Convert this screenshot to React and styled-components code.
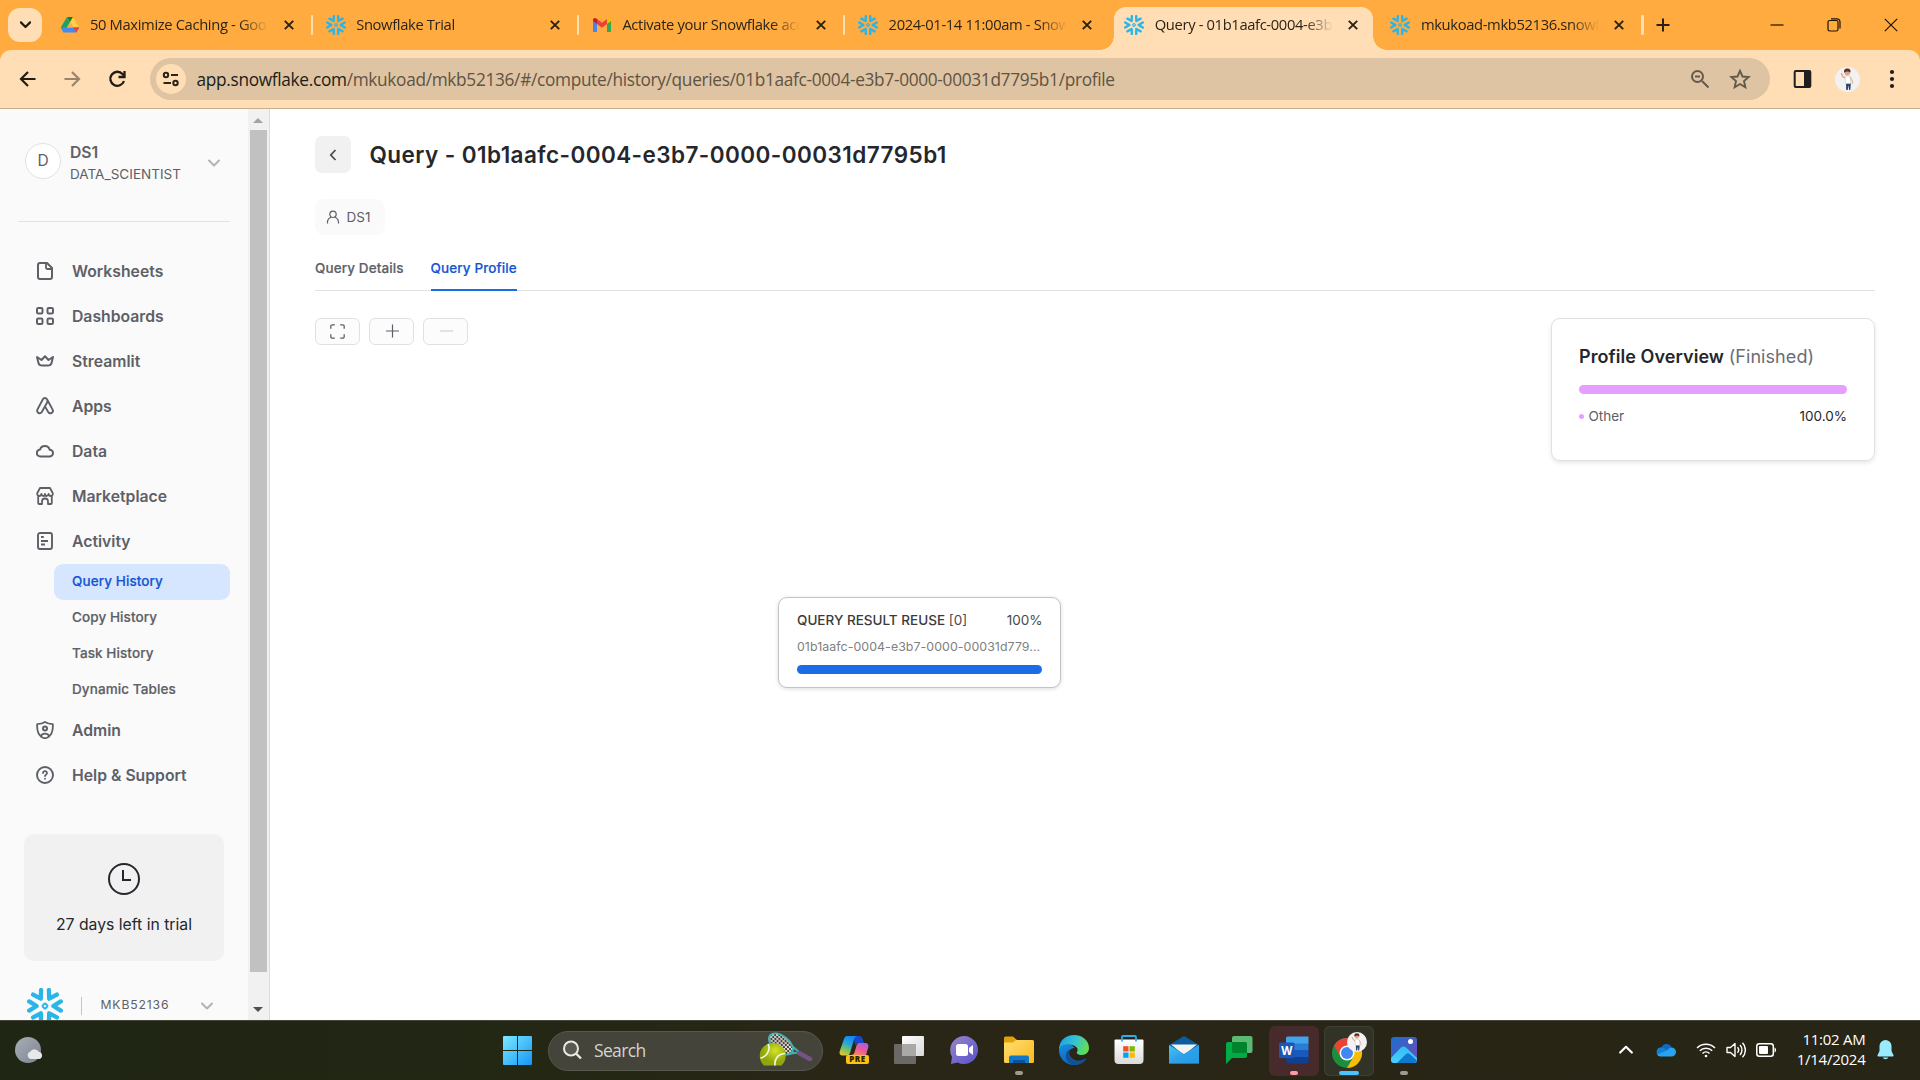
import React from "react";
import styled, { createGlobalStyle, css } from "styled-components";

const Global = createGlobalStyle`
  * { box-sizing: border-box; }
  html, body { margin: 0; padding: 0; background: #fff; }
  body { font-family: Inter, "Liberation Sans", sans-serif; overflow: hidden; }
`;

const segoe = css`font-family: "Open Sans", "Noto Sans", sans-serif;`;

const Screen = styled.div`
  width: 1920px;
  height: 1080px;
  display: flex;
  flex-direction: column;
  overflow: hidden;
`;

/* ---------- Browser chrome ---------- */
const TabStrip = styled.div`
  height: 50px;
  flex: none;
  display: flex;
  align-items: stretch;
  background: #ffab40;
  padding-left: 8px;
`;
const TabSearch = styled.div`
  width: 34px;
  height: 34px;
  margin: 8px 5.5px 0 0;
  border-radius: 12px;
  background: #ffddb5;
  display: flex;
  align-items: center;
  justify-content: center;
`;
const Tab = styled.div`
  position: relative;
  width: 266.2px;
  flex: none;
  display: flex;
  align-items: center;
  padding-left: 12px;
  ${(p) => p.$active && css`
    margin-top: 7px;
    padding-bottom: 7px;
    &::before {
      content: "";
      position: absolute;
      inset: 0 5px 0 2px;
      background: #ffddb5;
      border-radius: 12px 12px 0 0;
    }
    &::after {
      content: "";
      position: absolute;
      bottom: 0;
      left: -12px;
      right: -9px;
      height: 14px;
      background:
        radial-gradient(circle at 0 0, transparent 13.5px, #ffddb5 14px) left / 14px 14px no-repeat,
        radial-gradient(circle at 100% 0, transparent 13.5px, #ffddb5 14px) right / 14px 14px no-repeat;
    }
  `}
  & > * { position: relative; z-index: 1; flex: none; }
`;
const TabIcon = styled.span`
  width: 20px;
  height: 20px;
  display: flex;
`;
const TabTitle = styled.span`
  ${segoe}
  margin-left: 10.5px;
  width: 177px;
  height: 24px;
  line-height: 23px;
  font-size: 14.75px;
  letter-spacing: -0.36px;
  color: #2b2419;
  white-space: nowrap;
  overflow: hidden;
  mask-image: linear-gradient(90deg, #000 150px, transparent 178px);
`;
const TabClose = styled.span`
  display: flex;
  margin-left: 15.5px;
`;
const TabDivider = styled.i`
  width: 2.5px;
  height: 20px;
  margin-left: 16px;
  border-radius: 1px;
  background: #ffddb5;
  visibility: ${(p) => (p.$hidden ? "hidden" : "visible")};
`;
const NewTab = styled.div`
  display: flex;
  align-items: center;
  margin-left: 11.5px;
`;
const WindowButtons = styled.div`
  margin-left: auto;
  display: flex;
  align-items: center;
  height: 50px;
  & > span {
    width: 57.3px;
    display: flex;
    justify-content: center;
  }
`;
const ToolbarBack = styled.div`
  flex: none;
  background: #ffab40;
`;
const Toolbar = styled.div`
  height: 59px;
  display: flex;
  align-items: center;
  background: #ffddb5;
  border-bottom: 1px solid #c9ae8e;
  border-radius: 11px 11px 0 0;
  padding-left: 17px;
`;
const NavButton = styled.span`
  width: 22px;
  height: 22px;
  display: flex;
  flex: none;
  margin-right: ${(p) => p.$mr || 23}px;
  opacity: ${(p) => (p.$dim ? 0.45 : 1)};
`;
const Omnibox = styled.div`
  ${segoe}
  width: 1620px;
  flex: none;
  height: 42px;
  border-radius: 21px;
  background: #dec4a2;
  display: flex;
  align-items: center;
  padding: 0 19px 0 6px;
`;
const SiteInfo = styled.span`
  width: 30px;
  height: 30px;
  border-radius: 50%;
  background: #ffddb5;
  display: flex;
  align-items: center;
  justify-content: center;
  margin-right: 10.5px;
`;
const Url = styled.span`
  font-size: 17.25px;
  letter-spacing: -0.31px;
  color: #5f5345;
  flex: 1;
  white-space: nowrap;
  b { font-weight: 400; color: #201c17; }
`;
const OmniIcon = styled.span`
  display: flex;
  margin-left: 19px;
`;
const ToolbarRight = styled.div`
  display: flex;
  align-items: center;
  flex: 1;
  padding-left: 21.5px;
  svg { flex: none; }
  svg + svg { margin-left: 22.5px; }
  svg:last-child { margin-left: 25px; }
`;

/* ---------- Page ---------- */
const Page = styled.div`
  height: 911px;
  flex: none;
  display: flex;
  overflow: hidden;
  background: #fff;
`;
const Sidebar = styled.aside`
  width: 248px;
  flex: none;
  background: #fafafa;
  overflow: hidden;
  color: #5d6066;
`;
const Account = styled.div`
  height: 113px;
  margin: 0 18px;
  padding: 0 10px 22px 7px;
  border-bottom: 1px solid #dfe1e3;
  display: flex;
  align-items: center;
`;
const Avatar = styled.div`
  width: 36px;
  height: 36px;
  border-radius: 50%;
  border: 1px solid #e0e1e3;
  background: #fff;
  display: flex;
  align-items: center;
  justify-content: center;
  font-size: 15.5px;
  line-height: 18px;
  padding-bottom: 1px;
  margin: 14px 9px 0 0;
`;
const AccountText = styled.div`
  padding-top: 18px;
  flex: 1;
  strong { display: block; font-size: 15.75px; line-height: 22px; font-weight: 600; }
  span { display: block; font-size: 13.5px; line-height: 21px; letter-spacing: 0.03px; }
`;
const ChevronWrap = styled.span`
  display: flex;
  margin-top: ${(p) => p.$mt || 0}px;
  margin-left: auto;
`;
const Nav = styled.nav`
  padding: 26.5px 18px 0;
`;
const NavItem = styled.div`
  height: 45px;
  padding-left: 18px;
  display: flex;
  align-items: center;
  gap: 18px;
  font-size: 15.75px;
  font-weight: 600;
  svg { flex: none; }
`;
const SubList = styled.div`
  padding-left: 36px;
  margin: 0.5px 0 -0.5px;
`;
const SubItem = styled.div`
  height: 36px;
  line-height: 34px;
  padding-left: 18px;
  border-radius: 9px;
  font-size: 13.5px;
  font-weight: 500;
  letter-spacing: 0.09px;
  -webkit-text-stroke: 0.2px currentColor;
  background: ${(p) => (p.$active ? "#d6e6ff" : "transparent")};
  color: ${(p) => (p.$active ? "#1455d4" : "inherit")};
`;
const Trial = styled.div`
  margin: 36.5px 24px 0;
  height: 127px;
  border-radius: 10px;
  background: #f1f1f1;
  display: flex;
  flex-direction: column;
  align-items: center;
  padding-top: 29px;
  font-size: 15.75px;
  color: #24272c;
  gap: 20px;
`;
const Footer = styled.div`
  height: 90px;
  display: flex;
  align-items: flex-start;
  padding: 27px 35px 0 27px;
`;
const FooterRule = styled.i`
  width: 1px;
  height: 18px;
  margin: 9px 18.5px 0 18px;
  background: #c3c5c8;
`;
const FooterName = styled.span`
  font-size: 12.2px;
  letter-spacing: 0.85px;
  line-height: 18px;
  margin-top: 8px;
`;
const ScrollTrack = styled.div`
  width: 22px;
  flex: none;
  background: #f1f1f1;
  border-right: 1px solid #dcdcdc;
  padding: 9px 3px 0 2px;
  display: flex;
  flex-direction: column;
  align-items: center;
`;
const Thumb = styled.div`
  width: 17px;
  height: 842px;
  flex: none;
  margin: 7px 0 35px;
  background: #c1c1c1;
`;
const ArrowHead = styled.i`
  border: 5px solid transparent;
  ${(p) => p.$up
    ? css`border-top: 0; border-bottom-color: #a3a3a3;`
    : css`border-bottom: 0; border-top-color: #505050;`}
`;
const Main = styled.main`
  flex: 1;
  padding: 27px 45px 0 45px;
  color: #24272c;
`;
const TitleRow = styled.div`
  display: flex;
  align-items: center;
  height: 37px;
`;
const BackButton = styled.div`
  width: 36px;
  height: 37px;
  border-radius: 7px;
  background: #f1f1f1;
  display: flex;
  align-items: center;
  justify-content: center;
`;
const Title = styled.h1`
  margin: 0 0 0 18.5px;
  font-size: 22.5px;
  font-weight: 600;
  letter-spacing: 0.43px;
  white-space: nowrap;
`;
const UserChip = styled.div`
  width: 70px;
  height: 36px;
  margin-top: 26px;
  border-radius: 9px;
  background: #fafafa;
  color: #5d6066;
  font-size: 13.5px;
  display: flex;
  align-items: center;
  gap: 6.5px;
  padding-left: 11px;
`;
const PageTabs = styled.div`
  margin-top: 14px;
  height: 42px;
  border-bottom: 1px solid #dfe1e3;
  display: flex;
  gap: 27px;
`;
const PageTab = styled.div`
  height: 42px;
  line-height: 38px;
  font-size: 13.5px;
  font-weight: 500;
  letter-spacing: 0.1px;
  -webkit-text-stroke: 0.2px currentColor;
  color: ${(p) => (p.$active ? "#1455d4" : "#5d6066")};
  border-bottom: 2px solid ${(p) => (p.$active ? "#1a6ce7" : "transparent")};
`;
const Body = styled.div`
  display: flex;
  justify-content: space-between;
  align-items: flex-start;
  margin-top: 27px;
`;
const ZoomTools = styled.div`
  display: flex;
  gap: 9px;
`;
const ToolButton = styled.div`
  width: 45px;
  height: 27px;
  border: 1px solid #dfe1e3;
  border-radius: 6px;
  background: #fcfcfc;
  display: flex;
  align-items: center;
  justify-content: center;
  color: ${(p) => (p.$disabled ? "#cfd1d4" : "#5d6066")};
`;
const OverviewCard = styled.section`
  width: 324px;
  height: 143px;
  border: 1px solid #dfe1e3;
  border-radius: 9px;
  box-shadow: 0 2px 4px rgba(0, 0, 0, 0.1);
  padding: 27px 27px 0;
`;
const OverviewTitle = styled.div`
  font-size: 18px;
  line-height: 22px;
  font-weight: 600;
  letter-spacing: 0.07px;
  white-space: nowrap;
  span { font-weight: 400; color: #6a6d73; }
`;
const Bar = styled.div`
  height: 9px;
  border-radius: 5px;
  margin-top: ${(p) => p.$mt}px;
  background: ${(p) => p.$color};
`;
const Legend = styled.div`
  margin-top: 13px;
  display: flex;
  align-items: center;
  font-size: 13.5px;
  line-height: 18px;
  i { width: 5px; height: 5px; border-radius: 50%; background: #e5a0ff; margin-right: 4.5px; }
  span { color: #5d6066; flex: 1; }
`;
const Canvas = styled.div`
  position: relative;
`;
const Node = styled.div`
  position: absolute;
  left: 463px;
  top: 136px;
  width: 283px;
  height: 91px;
  border: 1px solid #c2c4c7;
  border-radius: 9px;
  background: #fff;
  box-shadow: 0 1px 4px rgba(0, 0, 0, 0.14);
  padding: 12px 18px 0;
`;
const NodeHead = styled.div`
  display: flex;
  justify-content: space-between;
  font-size: 13.5px;
  line-height: 20px;
  color: #4a4a4a;
  margin-right: -0.5px;
  b { font-weight: 500; color: #3a3a3a; }
`;
const NodeSub = styled.div`
  font-size: 12.375px;
  line-height: 18px;
  margin-top: 8px;
  letter-spacing: 0.07px;
  color: #808080;
  white-space: nowrap;
`;

/* ---------- Taskbar ---------- */
const Taskbar = styled.footer`
  ${segoe}
  height: 60px;
  flex: none;
  display: flex;
  align-items: center;
  background: linear-gradient(90deg, #202614 0%, #232714 28%, #2a2617 45%, #272515 100%);
  border-top: 1px solid #45453a;
  color: #fff;
`;
const Weather = styled.div`
  width: 492px;
  padding-left: 14px;
  display: flex;
`;
const Slot = styled.div`
  position: relative;
  width: 50px;
  height: 50px;
  margin-right: 5px;
  flex: none;
  display: flex;
  align-items: center;
  justify-content: center;
  border-radius: 6px;
  background: ${(p) => p.$bg || "transparent"};
  box-shadow: ${(p) => p.$edge || "none"};
  & > svg { margin-top: -1px; }
`;
const Indicator = styled.i`
  position: absolute;
  bottom: 1px;
  left: 50%;
  transform: translateX(-50%);
  width: ${(p) => p.$w || 8}px;
  height: 4px;
  border-radius: 2px;
  background: ${(p) => p.$color || "#9c9c94"};
`;
const SearchBox = styled.div`
  width: 275px;
  height: 40px;
  margin: 0 6px 0 1px;
  border-radius: 20px;
  background: #45443a;
  border: 1px solid #58574c;
  display: flex;
  align-items: center;
  padding: 0 9px 2px 13px;
  font-size: 17.5px;
  letter-spacing: -0.65px;
  color: #d4d3cd;
  span { flex: 1; margin-left: 12px; }
`;
const Tray = styled.div`
  margin-left: auto;
  display: flex;
  align-items: center;
  padding: 0 26.5px 2px 0;
`;
const TrayIcon = styled.span`
  display: flex;
  margin-right: ${(p) => p.$mr || 10}px;
`;
const Clock = styled.div`
  width: 79px;
  text-align: right;
  font-size: 15px;
  line-height: 20px;
  letter-spacing: -0.25px;
  margin: -2px 11px 0 0;
  white-space: nowrap;
`;

/* ---------- Drawings ---------- */
const Snowflake = ({ size = 20 }) => (
  <svg width={size} height={size} viewBox="0 0 36 36" fill="none" stroke="#29b5e8" strokeWidth="4.300" strokeLinecap="round" strokeLinejoin="round">
    {[0, 60, 120, 180, 240, 300].map((a) => (
      <path key={a} d="M2.200 13.400L9.600 18l-7.400 4.600" transform={`rotate(${a} 18 18)`} />
    ))}
    <rect x="16" y="16" width="4" height="4" rx=".8" strokeWidth="1.900" transform="rotate(45 18 18)" />
  </svg>
);
const Drive = () => (
  <svg width="20" height="20" viewBox="0 0 20 20">
    <path d="M7 2h6L7.200 12.200 3.700 17.600.8 12.600z" fill="#1ea362" />
    <path d="M7 2h6l6.200 10.600h-6z" fill="#ffcf48" />
    <path d="M7 2h6l-3 5z" fill="#188038" />
    <path d="M4 12.600h15.200l-2.900 5H3.700L.8 12.600z" fill="#4688f4" />
    <path d="M13.200 12.600h6l-2.900 5z" fill="#ea4335" />
    <path d="M10 7.200l3.200 5.400H6.900z" fill="#ffab40" />
  </svg>
);
const Gmail = () => (
  <svg width="20" height="20" viewBox="0 0 20 20">
    <path d="M1 5v11c0 .6.4 1 1 1h3V8z" fill="#4285f4" />
    <path d="M19 5v11c0 .6-.4 1-1 1h-3V8z" fill="#34a853" />
    <path d="M1 5c0-2 2-2.600 3.500-1.500L5 4v5L1 6z" fill="#c5221f" />
    <path d="M19 5c0-2-2-2.600-3.500-1.500L15 4v5l4-3z" fill="#fbbc04" />
    <path d="M5 4l5 3.800L15 4v5l-5 3.800L5 9z" fill="#ea4335" />
  </svg>
);
const Cross = () => (
  <svg width="12" height="12" viewBox="0 0 12 12" stroke="#2a2115" strokeWidth="1.900"><path d="M1.800 1.800l8.400 8.400M10.200 1.800l-8.400 8.400" /></svg>
);
const Chevron = ({ w = 12, color = "#b0b3b8", sw = 2, d = "M1 1.500l5 5 5-5" }) => (
  <svg width={w} height={w * 0.67} viewBox="0 0 12 8" fill="none" stroke={color} strokeWidth={sw} strokeLinecap="round" strokeLinejoin="round"><path d={d} /></svg>
);
const Person = ({ size }) => (
  <svg width={size} height={size} viewBox="0 0 26 26">
    <circle cx="13" cy="13" r="13" fill="#f3f1f2" />
    <path d="M6.500 6.500l2 4 3 1.500" stroke="#d9a184" strokeWidth="1.300" fill="none" />
    <path d="M10.500 9.500h5l1 8h-5.500z" fill="#fff" stroke="#b9c6b0" strokeWidth=".5" />
    <path d="M16 10.500l2.500 5-.8 2" stroke="#e3b49a" strokeWidth="1.200" fill="none" />
    <path d="M11.500 17.500h5l-.6 6.500h-1.300l-.4-5-1 5h-1.500z" fill="#2c4365" />
    <circle cx="12.800" cy="6" r="2.800" fill="#dba587" />
    <path d="M9.600 6c-.8-3.500 1.200-4.600 3.400-4.500 2.600 0 3.800 1.800 2.900 4.500-1.500-1.500-3.800-1.700-6.300 0z" fill="#5b3427" />
  </svg>
);

const S = ({ children }) => (
  <svg width="18" height="18" viewBox="0 0 18 18" fill="none" stroke="#5d6066" strokeWidth="2" strokeLinejoin="round" strokeLinecap="round">{children}</svg>
);
const icons = {
  worksheets: <S><path d="M11 1H4a2 2 0 0 0-2 2v12a2 2 0 0 0 2 2h10a2 2 0 0 0 2-2V6z" /><path d="M10 1.500V5.500a1.500 1.500 0 0 0 1.500 1.500H15.500" strokeWidth="1.800" /></S>,
  dashboards: <S><rect x="1" y="1" width="5.500" height="5.500" rx="1.300" /><rect x="11.500" y="1" width="5.500" height="5.500" rx="1.300" /><rect x="1" y="11.500" width="5.500" height="5.500" rx="1.300" /><rect x="11.500" y="11.500" width="5.500" height="5.500" rx="1.300" /></S>,
  streamlit: <S><path d="M1 5l1.600 6.400c.3 1 1 1.700 2 1.900 2.800.4 6 .4 8.800 0 1-.2 1.700-.9 2-1.900L17 5l-4.500 3L9 4.200 5.500 8z" /></S>,
  apps: <S><path d="M6.900 2.300L1.500 12.400a2.500 2.500 0 0 0 4.300 2.600l5.200-9.300M6.900 2.300a2.300 2.300 0 0 1 4.100 0l5.500 10.100a2.500 2.500 0 0 1-4.300 2.600L9.700 10.600M11 2.300c.6 1.200.6 2.300 0 3.400" strokeWidth="1.900" /></S>,
  data: <S><path d="M4.500 14.500a3.500 3.500 0 0 1-.4-7 5 5 0 0 1 9.600.2 3.400 3.400 0 0 1-.2 6.800z" /></S>,
  marketplace: <S><path d="M4 1h10l2.800 5.200c.2 2-.8 2.800-2 2.800s-2-.8-2.200-2c-.3 1.200-1.200 2-2.200 2S9 8.300 9 7c0 1.300-.6 2-1.600 2S5.600 8.200 5.400 7C5.200 8.200 4.300 9 3.200 9S1 8.200 1.200 6.200zM2.200 9.500V16a1 1 0 0 0 1 1H6v-2.500a3 3 0 0 1 6 0V17h2.800a1 1 0 0 0 1-1V9.500" strokeWidth="1.800" /></S>,
  activity: <S><rect x="2" y="1" width="14" height="16" rx="2" strokeWidth="1.900" /><path d="M5 5h2.800M5 9h7M5 12.500h4" strokeLinecap="butt" /></S>,
  admin: <S><path d="M9 1c2 1.300 4.500 2 7.800 2.200.4 5.500-1 10.800-5.300 13.300-1.600.8-3.400.8-5 0C2.200 14 .8 8.700 1.200 3.200 4.500 3 7 2.300 9 1z" strokeWidth="1.800" /><circle cx="9" cy="7.500" r="2" /><path d="M5 15.500c.2-2 1.800-2.800 4-2.800s3.800.8 4 2.800" strokeWidth="1.800" /></S>,
  help: <S><circle cx="9" cy="9" r="8" strokeWidth="1.900" /><path d="M7 7a2 2 0 1 1 2.800 1.900c-.5.300-.8.600-.8 1.200M9 12.700v.1" strokeWidth="1.800" /></S>,
};

const Racket = () => (
  <svg width="54" height="36" viewBox="0 -1 54 36">
    <defs>
      <clipPath id="head"><ellipse cx="22" cy="11" rx="14" ry="8" transform="rotate(38 22 11)" /></clipPath>
      <radialGradient id="ball" cx=".6" cy=".35"><stop offset="0" stopColor="#d3e424" /><stop offset="1" stopColor="#91a60b" /></radialGradient>
    </defs>
    <g clipPath="url(#head)" stroke="#e9dfe0" strokeWidth="1">
      {Array.from({ length: 15 }, (_, i) => <path key={i} d={`M${i * 4 - 16} 0l32 30M${i * 4} 0l-28 30`} />)}
    </g>
    <ellipse cx="22" cy="11" rx="14" ry="8" transform="rotate(38 22 11)" fill="none" stroke="#42b4ae" strokeWidth="1.800" />
    <path d="M33 13l7 6M31 20.500l9-1" stroke="#42b4ae" strokeWidth="1.800" />
    <path d="M40 20l11 6" stroke="#775285" strokeWidth="4.500" strokeLinecap="round" />
    <path d="M5 32.500A13 13 0 1 1 22.500 32.500z" fill="url(#ball)" />
    <path d="M9 11c3 5-1 13-7.500 14M26 20.500c-6 0-11 5-10 12" stroke="#f5f8e8" strokeWidth="1.600" fill="none" />
  </svg>
);
const task = {
  windows: (
    <svg width="29" height="29" viewBox="0 0 29 29">
      <defs><linearGradient id="win" x1="0" y1="0" x2="1" y2="1"><stop offset="0" stopColor="#7be9ff" /><stop offset="1" stopColor="#1597f5" /></linearGradient></defs>
      <path d="M0 1a1 1 0 0 1 1-1h13v14H0zM15 0h13a1 1 0 0 1 1 1v13H15zM0 15h14v14H1a1 1 0 0 1-1-1zM15 15h14v13a1 1 0 0 1-1 1H15z" fill="url(#win)" />
    </svg>
  ),
  copilot: (
    <svg width="30" height="30" viewBox="0 0 30 30">
      <defs>
        <linearGradient id="cpa" x1=".6" y1="0" x2=".2" y2="1"><stop offset="0" stopColor="#1684f2" /><stop offset=".4" stopColor="#25a9d8" /><stop offset=".7" stopColor="#7fc25a" /><stop offset="1" stopColor="#e8c531" /></linearGradient>
        <linearGradient id="cpb" x1=".8" y1="0" x2=".2" y2="1"><stop offset="0" stopColor="#a45de8" /><stop offset=".5" stopColor="#e75a9c" /><stop offset="1" stopColor="#ff8a4c" /></linearGradient>
      </defs>
      <path d="M14 1h6c2 0 3 1 3.500 2.500L25 8h-5c-2 0-3 1-3.500 2.500z" fill="#1648c8" />
      <path d="M8 1h10c-1.500.5-2.300 1.500-3 3.500L11 18c-.5 1.500-1.500 2.500-3 2.500H4c-3 0-4-2-3.200-4.500L5 4c.6-2 1.500-3 3-3z" fill="url(#cpa)" />
      <path d="M20 8h6c3 0 4 2 3.200 4.500L27 20H12c2 0 3-1 3.500-2.500l2-7C18 9 18.700 8 20 8z" fill="url(#cpb)" />
      <rect x="7" y="20" width="23" height="9" rx="2" fill="#ffc20e" />
      <text x="18.500" y="27.300" textAnchor="middle" fontFamily="Open Sans" fontWeight="800" fontSize="8" letterSpacing=".5" fill="#2a2108">PRE</text>
    </svg>
  ),
  views: (
    <svg width="30" height="29" viewBox="0 0 30 29">
      <defs><linearGradient id="tv" x1="0" y1="0" x2="1" y2="1"><stop offset="0" stopColor="#fff" /><stop offset="1" stopColor="#d9d9d9" /></linearGradient></defs>
      <rect x="8" y="0" width="22" height="20" rx="1" fill="url(#tv)" />
      <rect x="0" y="8" width="22" height="20" rx="1" fill="#6f6f6d" fillOpacity=".93" />
      <rect x="8" y="8" width="14" height="12" fill="#a9a9a7" />
    </svg>
  ),
  meet: (
    <svg width="30" height="30" viewBox="0 0 30 30">
      <defs><linearGradient id="mt" x1="0" y1="0" x2="1" y2="1"><stop offset="0" stopColor="#9a86c9" /><stop offset="1" stopColor="#5751cf" /></linearGradient></defs>
      <path d="M15 1a14 14 0 1 1-6.500 26.400L2 29l1-7A14 14 0 0 1 15 1z" fill="url(#mt)" />
      <rect x="7" y="9" width="12" height="12" rx="2.500" fill="#fff" /><path d="M20 13l4-3v10l-4-3z" fill="#fff" />
    </svg>
  ),
  explorer: (
    <svg width="30" height="28" viewBox="0 0 30 28">
      <defs><linearGradient id="fe" x1="0" y1="0" x2="1" y2="1"><stop offset="0" stopColor="#ffdf73" /><stop offset="1" stopColor="#fbb81b" /></linearGradient></defs>
      <path d="M0 2a1.500 1.500 0 0 1 1.500-1.500H9L13 4v5H0z" fill="#e2a009" />
      <path d="M0 6.500h9L12 4h16.500A1.500 1.500 0 0 1 30 5.500v20a1.500 1.500 0 0 1-1.500 1.500h-27A1.500 1.500 0 0 1 0 25.500z" fill="url(#fe)" />
      <path d="M5 27v-5.500a2 2 0 0 1 2-2h16a2 2 0 0 1 2 2V27h-4v-2.500H9V27z" fill="#0f78cc" /><path d="M9 27v-3h12v3z" fill="#0b5398" />
    </svg>
  ),
  edge: (
    <svg width="30" height="30" viewBox="0 0 30 30">
      <defs>
        <linearGradient id="eg" x1="0" y1=".2" x2="1" y2=".5"><stop offset="0" stopColor="#1f9fe0" /><stop offset=".5" stopColor="#35c1d3" /><stop offset="1" stopColor="#62df50" /></linearGradient>
        <linearGradient id="eb" x1="0" y1="0" x2=".5" y2="1"><stop offset="0" stopColor="#1590df" /><stop offset="1" stopColor="#0c5fc0" /></linearGradient>
      </defs>
      <path d="M0 13C1 5 7 0 15 0c9 0 15 6 15 13 0 4-3 7-7 7-4 0-6-1.500-5-3 2-3-1-6.500-5-7C8 9.500 2 10 0 15z" fill="url(#eg)" />
      <path d="M0 15C1 10 6 9 10 9.500c3 .5 5 2 5.500 3.500C11 13 9 17 10.500 20c2 4.500 7 6.500 11.500 5.500 2-.5 4-1.500 5.500-2C25 27.500 20 30 15 30 6 30 0 23 0 15z" fill="url(#eb)" />
      <path d="M11 14c-2 5 0 10 6 12 4 1.200 8-.5 10.500-2.500C24 29 18 31 13.500 29.500 5 26.500 5 17 11 14z" fill="#134f91" />
    </svg>
  ),
  store: (
    <svg width="30" height="30" viewBox="0 0 30 30">
      <defs><linearGradient id="st" x1="0" y1="0" x2="0" y2="1"><stop offset="0" stopColor="#fff" /><stop offset="1" stopColor="#dadada" /></linearGradient></defs>
      <path d="M.500 5.500a1 1 0 0 1 1-1h27a1 1 0 0 1 1 1V25a4 4 0 0 1-4 4h-21a4 4 0 0 1-4-4z" fill="url(#st)" />
      <path d="M8 6.500V2a1 1 0 0 1 1-1h12a1 1 0 0 1 1 1v4.500" fill="none" stroke="#2aaef0" strokeWidth="1.800" />
      <path d="M9.200 11.200h5.300v5.300H9.200z" fill="#f25022" /><path d="M15.500 11.200h5.300v5.300h-5.300z" fill="#7fba00" /><path d="M9.200 17.500h5.300v5.300H9.200z" fill="#00a4ef" /><path d="M15.500 17.500h5.300v5.300h-5.300z" fill="#ffb900" />
    </svg>
  ),
  mail: (
    <svg width="30" height="30" viewBox="0 0 30 30">
      <defs><linearGradient id="ml" x1="0" y1="0" x2="1" y2="1"><stop offset="0" stopColor="#48c4f6" /><stop offset="1" stopColor="#1a7fd8" /></linearGradient></defs>
      <path d="M0 10L15 1l15 9v6H0z" fill="#0a5c9f" /><path d="M2 9.500h26L15 20z" fill="#f2f2f2" />
      <path d="M0 10l15 9 15-9v18.500H0z" fill="url(#ml)" /><path d="M0 28.500L15 19l15-9v18.500z" fill="#2ba3ea" opacity=".7" />
    </svg>
  ),
  gchat: (
    <svg width="28" height="30" viewBox="0 0 28 30">
      <rect x="7" y="1" width="20.500" height="17" rx="2" fill="#5bb974" />
      <path d="M1 9a2 2 0 0 1 2-2h17a2 2 0 0 1 2 2v12a2 2 0 0 1-2 2H7l-6 6z" fill="#00ac47" /><path d="M7 7h13a2 2 0 0 1 2 2v9H9a2 2 0 0 1-2-2z" fill="#00832d" />
    </svg>
  ),
  word: (
    <svg width="30" height="28" viewBox="0 0 30 28">
      <path d="M8 .5h21.500V8H7V1.500z" fill="#41a5ee" /><path d="M7 7.500h22.500v7H7z" fill="#2b7cd3" /><path d="M7 14h22.500v7H7z" fill="#185abd" /><path d="M7 21h22.500v6.500H8L7 26z" fill="#103f91" />
      <rect x="0" y="6.500" width="15.500" height="15.500" rx="1.500" fill="#1b56b4" />
      <text x="7.700" y="18.500" textAnchor="middle" fontFamily="Open Sans" fontWeight="700" fontSize="11.500" fill="#fff">W</text>
    </svg>
  ),
  chrome: (
    <svg width="36" height="38" viewBox="0 0 36 38">
      <g transform="translate(1 7)">
        <circle cx="15" cy="15" r="15" fill="#1e8e3e" />
        <path d="M15 7.500h13A15 15 0 0 1 15 30l6.500-11.200z" fill="#fbbc04" />
        <path d="M2 7.500A15 15 0 0 1 28 7.500H15l-6.500 11.200z" fill="#ea4335" />
        <circle cx="15" cy="15" r="7.500" fill="#fff" /><circle cx="15" cy="15" r="6" fill="#4285f4" />
      </g>
      <g transform="translate(16 1)"><Person size={20} /></g>
    </svg>
  ),
  photos: (
    <svg width="26" height="26" viewBox="0 0 26 26">
      <defs>
        <linearGradient id="ph" x1="0" y1="0" x2="1" y2="1"><stop offset="0" stopColor="#1a6fd0" /><stop offset="1" stopColor="#7448b4" /></linearGradient>
        <linearGradient id="ph2" x1="0" y1="0" x2="0" y2="1"><stop offset="0" stopColor="#35bdf2" /><stop offset="1" stopColor="#46d0fb" /></linearGradient>
        <clipPath id="phc"><rect width="26" height="26" rx="3" /></clipPath>
      </defs>
      <g clipPath="url(#phc)">
        <rect width="26" height="26" fill="url(#ph)" />
        <path d="M0 21l10-10.500c1.500-1.500 3.500-1.500 5 0L26 21v5H0z" fill="url(#ph2)" />
        <path d="M6 26l9-9c1.200-1 2.500-1 3.700 0L26 23.500V26z" fill="#0f79cf" />
      </g>
      <circle cx="19.500" cy="4.500" r="2.500" fill="#fff" />
    </svg>
  ),
};

const tabs = [
  { title: "50 Maximize Caching - Google Drive", icon: <Drive /> },
  { title: "Snowflake Trial", icon: <Snowflake /> },
  { title: "Activate your Snowflake account", icon: <Gmail /> },
  { title: "2024-01-14 11:00am - Snowflake", icon: <Snowflake />, noRule: true },
  { title: "Query - 01b1aafc-0004-e3b7-0000", icon: <Snowflake />, active: true, noRule: true },
  { title: "mkukoad-mkb52136.snowflake", icon: <Snowflake /> },
];

const Item = ({ icon, children }) => <NavItem>{icons[icon]}<span>{children}</span></NavItem>;

export default function App() {
  return (
    <Screen>
      <Global />
      <TabStrip>
        <TabSearch><Chevron w={11} color="#1f1a12" sw={2.4} /></TabSearch>
        {tabs.map((t) => (
          <Tab key={t.title} $active={t.active}>
            <TabIcon>{t.icon}</TabIcon>
            <TabTitle>{t.title}</TabTitle>
            <TabClose><Cross /></TabClose>
            <TabDivider $hidden={t.noRule} />
          </Tab>
        ))}
        <NewTab><svg width="14" height="14" stroke="#2a2115" strokeWidth="2"><path d="M7 .5v13M.5 7h13" /></svg></NewTab>
        <WindowButtons>
          <span><svg width="14" height="14" stroke="#1b1306" strokeWidth="1.200"><path d="M.5 7h13" /></svg></span>
          <span><svg width="14" height="14" fill="none" stroke="#1b1306" strokeWidth="1.200"><rect x="1" y="2.500" width="10" height="10.500" rx="1.800" /><path d="M4 .8h6a3 3 0 0 1 3 3V10.500" /></svg></span>
          <span><svg width="14" height="14" stroke="#1b1306" strokeWidth="1.200"><path d="M.8.8l12.400 12.400M13.200.8L.8 13.200" /></svg></span>
        </WindowButtons>
      </TabStrip>
      <ToolbarBack>
        <Toolbar>
          <NavButton><svg width="22" height="22" viewBox="0 0 22 22" fill="none" stroke="#211c14" strokeWidth="2.200"><path d="M18.500 11H4.500M11 4l-7 7 7 7" /></svg></NavButton>
          <NavButton $dim><svg width="22" height="22" viewBox="0 0 22 22" fill="none" stroke="#211c14" strokeWidth="2.200"><path d="M2.500 11h14M10 4l7 7-7 7" /></svg></NavButton>
          <NavButton $mr="21"><svg width="22" height="22" viewBox="0 0 22 22" fill="none" stroke="#211c14" strokeWidth="2.300"><path d="M17 13A7 7 0 1 1 15.500 6l1.500 1.600" /><path d="M17.500 3v6H11.500" /></svg></NavButton>
          <Omnibox>
            <SiteInfo><svg width="18" height="16" viewBox="0 0 18 16" fill="none" stroke="#2a2419" strokeWidth="2"><circle cx="4" cy="4" r="2.200" /><path d="M9 4h7M1.500 12H9" /><circle cx="13.500" cy="12" r="2.200" /></svg></SiteInfo>
            <Url><b>app.snowflake.com</b>/mkukoad/mkb52136/#/compute/history/queries/01b1aafc-0004-e3b7-0000-00031d7795b1/profile</Url>
            <OmniIcon><svg width="20" height="20" viewBox="0 0 20 20" fill="none" stroke="#645a4c" strokeWidth="2"><circle cx="7.500" cy="7.500" r="5.500" /><path d="M5 7.500h5M12 12l6.500 6.500" /></svg></OmniIcon>
            <OmniIcon><svg width="22" height="22" viewBox="0 0 22 22" fill="none" stroke="#645a4c" strokeWidth="1.900"><path d="M11 2.800l2.500 5.700 6.200.5-4.700 4.100 1.400 6.100L11 16l-5.400 3.200L7 13.100 2.300 9l6.200-.5z" /></svg></OmniIcon>
          </Omnibox>
          <ToolbarRight>
            <svg width="21" height="20" viewBox="0 0 21 20"><rect x="2.700" y="2" width="15.600" height="16" rx="1" fill="none" stroke="#1f1f1f" strokeWidth="2" /><path d="M12 2h6v16h-6z" fill="#1f1f1f" /></svg>
            <Person size={25} />
            <svg width="14" height="20" viewBox="0 0 14 20" fill="#1f1f1f"><circle cx="7" cy="3" r="2.100" /><circle cx="7" cy="10" r="2.100" /><circle cx="7" cy="17" r="2.100" /></svg>
          </ToolbarRight>
        </Toolbar>
      </ToolbarBack>

      <Page>
        <Sidebar>
          <Account>
            <Avatar>D</Avatar>
            <AccountText><strong>DS1</strong><span>DATA_SCIENTIST</span></AccountText>
            <ChevronWrap $mt={18}><Chevron /></ChevronWrap>
          </Account>
          <Nav>
            <Item icon="worksheets">Worksheets</Item>
            <Item icon="dashboards">Dashboards</Item>
            <Item icon="streamlit">Streamlit</Item>
            <Item icon="apps">Apps</Item>
            <Item icon="data">Data</Item>
            <Item icon="marketplace">Marketplace</Item>
            <Item icon="activity">Activity</Item>
            <SubList>
              <SubItem $active>Query History</SubItem>
              <SubItem>Copy History</SubItem>
              <SubItem>Task History</SubItem>
              <SubItem>Dynamic Tables</SubItem>
            </SubList>
            <Item icon="admin">Admin</Item>
            <Item icon="help">Help &amp; Support</Item>
          </Nav>
          <Trial>
            <svg width="32" height="32" viewBox="0 0 32 32" fill="none" stroke="#24272c" strokeWidth="2"><circle cx="16" cy="16" r="15" /><path d="M15 7v10h8" /></svg>
            <span>27 days left in trial</span>
          </Trial>
          <Footer>
            <Snowflake size={36} />
            <FooterRule />
            <FooterName>MKB52136</FooterName>
            <ChevronWrap $mt={14}><Chevron /></ChevronWrap>
          </Footer>
        </Sidebar>
        <ScrollTrack><ArrowHead $up /><Thumb /><ArrowHead /></ScrollTrack>

        <Main>
          <TitleRow>
            <BackButton><svg width="8" height="12" viewBox="0 0 8 12" fill="none" stroke="#4a4d52" strokeWidth="1.800"><path d="M6.500 1L1.800 6l4.700 5" /></svg></BackButton>
            <Title>Query - 01b1aafc-0004-e3b7-0000-00031d7795b1</Title>
          </TitleRow>
          <UserChip>
            <svg width="14" height="14" viewBox="0 0 14 14" fill="none" stroke="#5d6066" strokeWidth="1.200"><circle cx="7" cy="4.300" r="3.200" /><path d="M1.500 13.500V12c0-2.500 2-4 3.500-4.700M12.500 13.500V12c0-2.500-2-4-3.500-4.700" /></svg>
            DS1
          </UserChip>
          <PageTabs>
            <PageTab>Query Details</PageTab>
            <PageTab $active>Query Profile</PageTab>
          </PageTabs>
          <Body>
            <ZoomTools>
              <ToolButton><svg width="15" height="15" viewBox="0 0 15 15" fill="none" stroke="currentColor" strokeWidth="1.300"><path d="M.8 4.800V2.300A1.500 1.500 0 0 1 2.300.8h2.500M10.200.8h2.500a1.500 1.500 0 0 1 1.500 1.500v2.500M14.200 10.200v2.500a1.500 1.500 0 0 1-1.500 1.500h-2.500M4.800 14.200H2.300a1.500 1.500 0 0 1-1.500-1.500v-2.500" /></svg></ToolButton>
              <ToolButton><svg width="15" height="15" stroke="currentColor" strokeWidth="1.200"><path d="M8.500 .5v13M2 7h13" /></svg></ToolButton>
              <ToolButton $disabled><svg width="15" height="15" stroke="currentColor" strokeWidth="1.200"><path d="M2 7h13" /></svg></ToolButton>
            </ZoomTools>
            <OverviewCard>
              <OverviewTitle>Profile Overview <span>(Finished)</span></OverviewTitle>
              <Bar $mt={17} $color="#e5a0ff" />
              <Legend><i /><span>Other</span>100.0%</Legend>
            </OverviewCard>
          </Body>
          <Canvas>
            <Node>
              <NodeHead><div><b>QUERY RESULT REUSE</b> [0]</div><div>100%</div></NodeHead>
              <NodeSub>01b1aafc-0004-e3b7-0000-00031d779...</NodeSub>
              <Bar $mt={9} $color="#1a6ce7" />
            </Node>
          </Canvas>
        </Main>
      </Page>

      <Taskbar>
        <Weather>
          <svg width="30" height="30" viewBox="0 0 30 30">
            <defs><linearGradient id="moon" x1="0" y1="0" x2="1" y2="1"><stop offset="0" stopColor="#a9afb7" /><stop offset="1" stopColor="#7d848e" /></linearGradient></defs>
            <circle cx="14" cy="14" r="13" fill="url(#moon)" /><path d="M16 23a4 4 0 0 1 .500-7.500 5 5 0 0 1 8.500.5 3.600 3.600 0 0 1 .5 7z" fill="#e6e8eb" />
          </svg>
        </Weather>
        <Slot>{task.windows}</Slot>
        <SearchBox>
          <svg width="20" height="20" viewBox="0 0 20 20" fill="none" stroke="#e8e8e4" strokeWidth="2"><circle cx="9" cy="8.500" r="7" fill="#5a594f" /><path d="M14 13.500l5 5" strokeWidth="2.400" /></svg>
          <span>Search</span>
          <Racket />
        </SearchBox>
        <Slot>{task.copilot}</Slot>
        <Slot>{task.views}</Slot>
        <Slot>{task.meet}</Slot>
        <Slot>{task.explorer}<Indicator /></Slot>
        <Slot>{task.edge}</Slot>
        <Slot>{task.store}</Slot>
        <Slot>{task.mail}</Slot>
        <Slot>{task.gchat}</Slot>
        <Slot $bg="#472a2b">{task.word}<Indicator $color="#ff9aa6" /></Slot>
        <Slot $bg="#303325" $edge="0 0 0 1px #3e4034 inset">{task.chrome}<Indicator $w={20} $color="#4cc2ff" /></Slot>
        <Slot>{task.photos}<Indicator /></Slot>
        <Tray>
          <TrayIcon $mr={23}><Chevron w={14} color="#fff" sw={1.800} d="M1 6.500l5-5 5 5" /></TrayIcon>
          <TrayIcon $mr={20}><svg width="20" height="14" viewBox="0 0 20 14"><path d="M5.500 4.500a5.500 5.500 0 0 1 10-.5L13 9 5 13a4.500 4.500 0 0 1 .5-8.500z" fill="#0f6cbd" /><path d="M5 4.500c2 0 3 .5 8 4L4 13A4.300 4.300 0 0 1 5 4.500z" fill="#1280d8" /><path d="M15.500 4.500a4.500 4.500 0 0 1 0 9H4.500C3 13.500 1.500 12.500 1 11.500l10-4c1.500-2 3-3 4.500-3z" fill="#29a3f0" /></svg></TrayIcon>
          <TrayIcon><svg width="20" height="16" viewBox="0 0 20 16" fill="none" stroke="#fff" strokeWidth="1.500"><path d="M1 6a12.800 12.800 0 0 1 18 0M3.800 8.800a8.800 8.800 0 0 1 12.400 0M6.500 11.500a5 5 0 0 1 7 0" /><circle cx="10" cy="14" r="1.300" fill="#fff" stroke="none" /></svg></TrayIcon>
          <TrayIcon><svg width="20" height="18" viewBox="0 0 20 18" fill="none" stroke="#fff" strokeWidth="1.400"><path d="M1 6.500h3.500L9 2.500v13l-4.500-4H1z" strokeLinejoin="round" /><path d="M11.500 6.300a4 4 0 0 1 0 5.400M14 4a7.300 7.300 0 0 1 0 10M16.500 1.800a10.500 10.500 0 0 1 0 14.400" /></svg></TrayIcon>
          <TrayIcon><svg width="21" height="14" viewBox="0 0 21 14"><rect x=".8" y=".8" width="16.500" height="12.400" rx="2.500" fill="none" stroke="#fff" strokeWidth="1.500" /><rect x="3" y="3" width="9" height="8" rx="1" fill="#fff" /><path d="M18.500 4.500c2 .5 2 4.500 0 5z" fill="#fff" /></svg></TrayIcon>
          <Clock>11:02 AM<br />1/14/2024</Clock>
          <svg width="17" height="20" viewBox="0 0 17 20" fill="#99ebff"><path d="M8.500 0a6 6 0 0 1 6 6v5l2 4.300a.8.800 0 0 1-.7 1.200H1.200a.8.800 0 0 1-.7-1.200L2.500 11V6a6 6 0 0 1 6-6zM5.700 17.500h5.600a2.900 2.300 0 0 1-5.600 0z" /></svg>
        </Tray>
      </Taskbar>
    </Screen>
  );
}
